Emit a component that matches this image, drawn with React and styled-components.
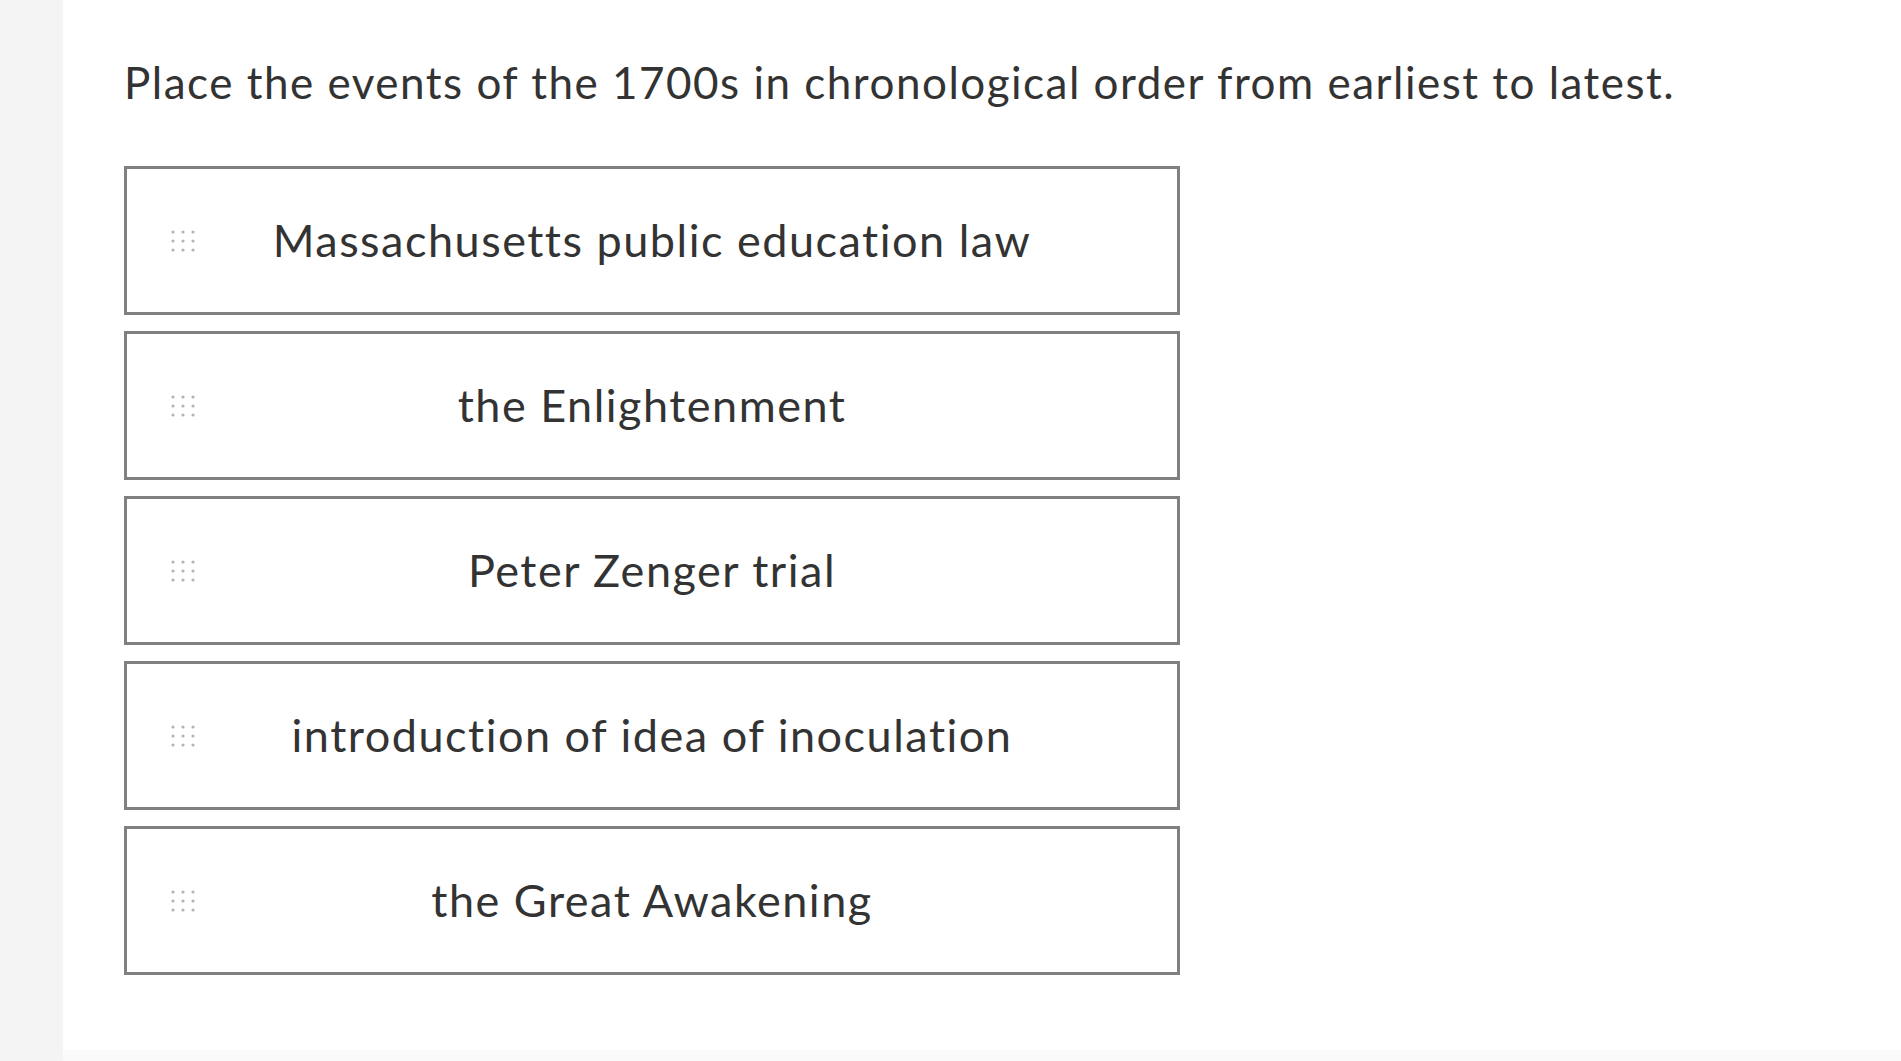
import React from "react";
import styled, { createGlobalStyle } from "styled-components";

const GlobalStyle = createGlobalStyle`
  html, body {
    margin: 0;
    padding: 0;
    background: #ffffff;
  }
  body {
    font-family: "Lato", "Liberation Sans", sans-serif;
    color: #333333;
  }
`;

const Page = styled.div`
  display: flex;
  height: 1061px;
  width: 100%;
  overflow: hidden;
`;

const Sidebar = styled.aside`
  width: 63px;
  flex: 0 0 63px;
  background: #f4f4f4;
`;

const Main = styled.main`
  flex: 1;
  display: flex;
  flex-direction: column;
  background: #ffffff;
`;

const Content = styled.section`
  flex: 1;
  padding: 60px 0 0 61px;
`;

const Footer = styled.div`
  height: 11px;
  background: #fafafa;
`;

const Prompt = styled.h1`
  margin: 0;
  font-family: "Lato", "Liberation Sans", sans-serif;
  font-weight: 400;
  font-size: 44px;
  line-height: 44px;
  letter-spacing: 1.5px;
  color: #333333;
`;

const List = styled.ol`
  list-style: none;
  margin: 62px 0 0 0;
  padding: 0;
  width: 1056px;
  display: flex;
  flex-direction: column;
  gap: 16px;
`;

const Card = styled.li`
  box-sizing: border-box;
  height: 149px;
  border: 3px solid #808080;
  background: #ffffff;
  display: grid;
  grid-template-columns: 90px 1fr 90px;
  align-items: center;
`;

const Handle = styled.span`
  padding-left: 44px;
  display: flex;
  align-items: center;
`;

const Label = styled.span`
  text-align: center;
  font-family: "Lato", "Liberation Sans", sans-serif;
  font-size: 45px;
  line-height: 1;
  letter-spacing: 1.5px;
  color: #333333;
`;

const GripIcon = () => (
  <svg width="24" height="22" viewBox="0 0 24 22" aria-hidden="true">
    {[0, 1, 2].map((r) =>
      [0, 1, 2].map((c) => (
        <circle key={`${r}-${c}`} cx={2 + c * 10} cy={2 + r * 9} r="1.6" fill="#b4b4b4" />
      ))
    )}
  </svg>
);

const items = [
  "Massachusetts public education law",
  "the Enlightenment",
  "Peter Zenger trial",
  "introduction of idea of inoculation",
  "the Great Awakening",
];

export default function App() {
  return (
    <>
      <GlobalStyle />
      <Page>
        <Sidebar />
        <Main>
          <Content>
            <Prompt>Place the events of the 1700s in chronological order from earliest to latest.</Prompt>
            <List>
              {items.map((t) => (
                <Card key={t}>
                  <Handle>
                    <GripIcon />
                  </Handle>
                  <Label>{t}</Label>
                  <span />
                </Card>
              ))}
            </List>
          </Content>
          <Footer />
        </Main>
      </Page>
    </>
  );
}
